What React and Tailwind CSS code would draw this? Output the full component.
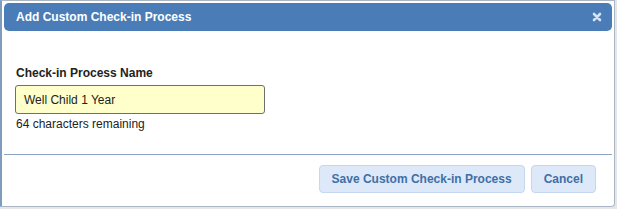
import React from 'react';

const App = () => {
  return (
    <div className="w-[617px] h-[209px] bg-[#e4e6ea] font-['Liberation_Sans',Arial,sans-serif]">
      <div className="w-[615px] h-[207px] bg-white border border-[#aab6c4] border-l-[2px] border-l-[#7f9cbd] rounded-br-[4px] p-[2px] flex flex-col">
        {/* Header */}
        <div className="h-[28px] bg-[#4a7db8] rounded-[5px] flex items-center justify-between pl-[12px] pr-[10px]">
          <span className="text-white font-bold text-[12px]">Add Custom Check-in Process</span>
          <svg width="10" height="10" viewBox="0 0 10 10" className="text-[#d6e4f5]">
            <path d="M2 2 L8 8 M8 2 L2 8" stroke="currentColor" strokeWidth="2.6" strokeLinecap="round" />
          </svg>
        </div>

        {/* Body */}
        <div className="pl-[12px] pt-[35px] h-[123px]">
          <label className="block text-[12px] font-bold text-[#222] leading-[14px]">Check-in Process Name</label>
          <div className="mt-[5px] -ml-[1px] w-[250px] h-[29px] bg-[#ffffcc] border border-[#6f6f6f] rounded-[3px] flex items-center pl-[8px] text-[12px] text-[#222]">
            Well Child 1 Year
          </div>
          <div className="mt-[3px] text-[12px] text-[#222] leading-[14px]">64 characters remaining</div>
        </div>

        {/* Footer */}
        <div className="border-t border-[#8aa6c4] flex justify-end gap-[6px] pr-[16px] pt-[10px]">
          <button className="h-[28px] px-[12px] bg-[#dde9f8] border border-[#c3d8f0] rounded-[4px] text-[12px] font-bold text-[#3f6fa7]">
            Save Custom Check-in Process
          </button>
          <button className="h-[28px] px-[12px] bg-[#dde9f8] border border-[#c3d8f0] rounded-[4px] text-[12px] font-bold text-[#3f6fa7]">
            Cancel
          </button>
        </div>
      </div>
    </div>
  );
};

export default App;
